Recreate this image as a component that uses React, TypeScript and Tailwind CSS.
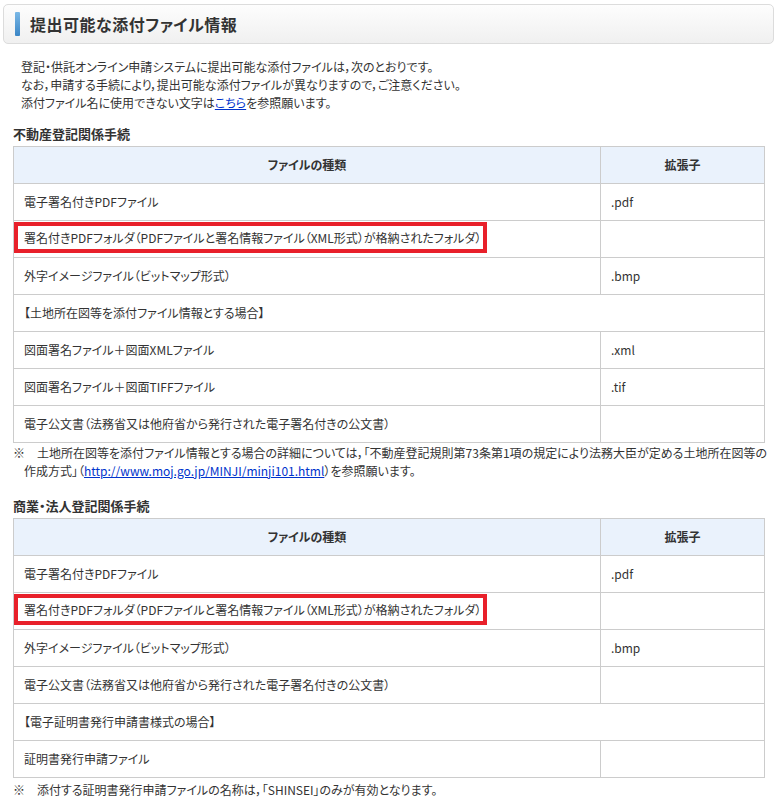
const font = {
  fontFamily: '"Noto Sans CJK JP", "Liberation Sans", sans-serif',
}

type Row = { name: React.ReactNode; ext?: string; span?: boolean }

const Marked = ({ children }: { children: React.ReactNode }) => (
  <span className="inline-block border-4 border-[#e8202a] pl-[6px] pr-[2px] leading-[23px]">{children}</span>
)

const markedText = '署名付きPDFフォルダ（PDFファイルと署名情報ファイル（XML形式）が格納されたフォルダ）'

const realEstate: Row[] = [
  { name: '電子署名付きPDFファイル', ext: '.pdf' },
  { name: <Marked>{markedText}</Marked>, ext: '' },
  { name: '外字イメージファイル（ビットマップ形式）', ext: '.bmp' },
  { name: '【土地所在図等を添付ファイル情報とする場合】', span: true },
  { name: '図面署名ファイル＋図面XMLファイル', ext: '.xml' },
  { name: '図面署名ファイル＋図面TIFFファイル', ext: '.tif' },
  { name: '電子公文書（法務省又は他府省から発行された電子署名付きの公文書）', ext: '' },
]

const corporate: Row[] = [
  { name: '電子署名付きPDFファイル', ext: '.pdf' },
  { name: <Marked>{markedText}</Marked>, ext: '' },
  { name: '外字イメージファイル（ビットマップ形式）', ext: '.bmp' },
  { name: '電子公文書（法務省又は他府省から発行された電子署名付きの公文書）', ext: '' },
  { name: '【電子証明書発行申請書様式の場合】', span: true },
  { name: '証明書発行申請ファイル', ext: '' },
]

function FileTable({ rows }: { rows: Row[] }) {
  return (
    <table className="ml-[13px] w-[752px] border-collapse text-[12px] text-[#333]">
      <thead>
        <tr className="h-[37px] bg-[#eaf2fc]">
          <th className="w-[587px] border border-[#cccccc] font-bold">ファイルの種類</th>
          <th className="border border-[#cccccc] font-bold">拡張子</th>
        </tr>
      </thead>
      <tbody>
        {rows.map((r, i) =>
          r.span ? (
            <tr key={i} className="h-[37px]">
              <td colSpan={2} className="border border-[#cccccc] pl-[10px]">
                {r.name}
              </td>
            </tr>
          ) : (
            <tr key={i} className="h-[37px]">
              <td
                className={`border border-[#cccccc] ${typeof r.name === 'string' ? 'pl-[10px]' : 'pl-0 pt-[1px] pb-0 align-top'}`}
              >
                {r.name}
              </td>
              <td className="border border-[#cccccc] pl-[10px]">{r.ext}</td>
            </tr>
          ),
        )}
      </tbody>
    </table>
  )
}

export default function App() {
  return (
    <div className="w-[779px] h-[809px] bg-white overflow-hidden text-[#333]" style={{ ...font, fontFeatureSettings: '"palt"' }}>
      <div className="pt-[4px] pl-[3px] pr-[5px]">
        <div className="h-[40px] rounded-[5px] border border-[#dcdcdc] bg-gradient-to-b from-[#fdfdfd] to-[#f0f0f0] flex items-center pl-[11px]">
          <div className="w-[5px] h-[24px] rounded-[1px] bg-gradient-to-b from-[#7ab8e6] to-[#3a86c6]" />
          <h1 className="ml-[10px] text-[16px] font-bold text-[#333] tracking-[0.5px]">提出可能な添付ファイル情報</h1>
        </div>
      </div>

      <div className="mt-[14px] pl-[21px] text-[12px] leading-[18px]">
        <p>登記・供託オンライン申請システムに提出可能な添付ファイルは，次のとおりです。</p>
        <p>なお，申請する手続により，提出可能な添付ファイルが異なりますので，ご注意ください。</p>
        <p>
          添付ファイル名に使用できない文字は<span className="text-[#0033cc] underline">こちら</span>を参照願います。
        </p>
      </div>

      <h2 className="mt-[14px] mb-[4px] pl-[13px] text-[13px] font-bold leading-[16px]">不動産登記関係手続</h2>
      <FileTable rows={realEstate} />
      <p className="ml-[13px] mt-[1px] pl-[11px] -indent-[11px] text-[12px] leading-[18px]">
        ※　土地所在図等を添付ファイル情報とする場合の詳細については，「不動産登記規則第73条第1項の規定により法務大臣が定める土地所在図等の
        <br />
        作成方式」（<span className="text-[#0033cc] underline">http://www.moj.go.jp/MINJI/minji101.html</span>）を参照願います。
      </p>

      <h2 className="mt-[18px] mb-[4px] pl-[13px] text-[13px] font-bold leading-[16px]">商業・法人登記関係手続</h2>
      <FileTable rows={corporate} />
      <p className="ml-[13px] mt-[3px] text-[12px] leading-[18px]">※　添付する証明書発行申請ファイルの名称は，「SHINSEI」のみが有効となります。</p>
    </div>
  )
}
